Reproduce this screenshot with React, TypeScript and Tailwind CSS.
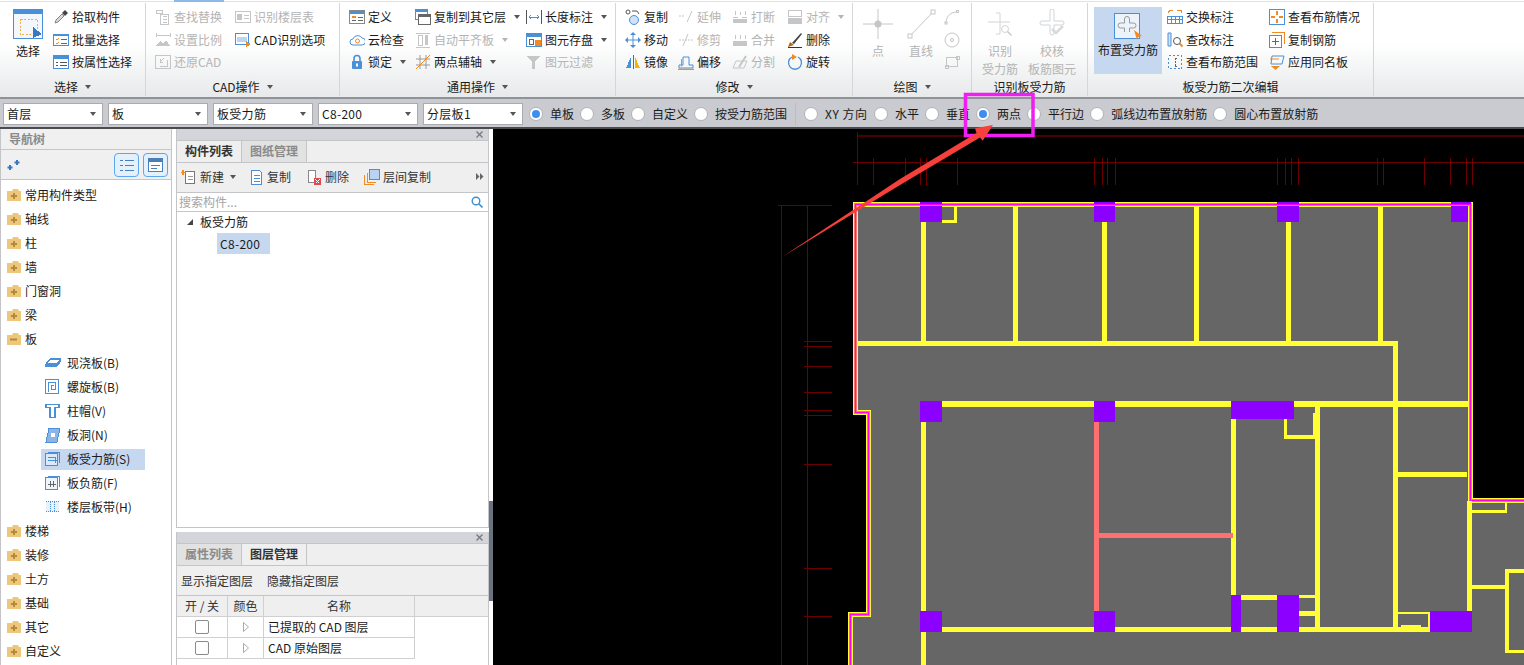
import React from "react";

const B = "#4a90d9";
const O = "#f08a24";
const D = "#c4c6c8"; // disabled icon grey

function Ico({ s = 16, children }: { s?: number; children: React.ReactNode }) {
  return (
    <svg width={s} height={s} viewBox={`0 0 ${s} ${s}`} fill="none" className="shrink-0" shapeRendering="crispEdges">
      {children}
    </svg>
  );
}

// ── ribbon icons ─────────────────────────────────────────────────────────────
const icons: Record<string, React.ReactNode> = {
  pick: <g shapeRendering="auto"><path d="M2 14l1-3 6-6 2 2-6 6z" fill="#d8d8d8" stroke="#888" /><path d="M9 4l3-3 3 3-3 3z" fill="#444" /></g>,
  batch: <><rect x=".5" y="2.5" width="15" height="11" fill="#fff" stroke={B} /><rect x="1" y="2" width="14" height="2" fill={B} /><path d="M3 7l1 1 2-2M3 11l1 1 2-2" stroke={O} /><path d="M8 7h6M8 11h6" stroke="#666" /></>,
  attr: <><rect x=".5" y="1.5" width="15" height="13" fill="#fff" stroke={B} /><rect x="1" y="2" width="14" height="3" fill={B} /><path d="M3 8h2M7 8h7M3 11h2M7 11h7" stroke="#555" /></>,
  find: <><path d="M5.5 5.5h8v10h-8z" stroke={D} /><path d="M1 1h6v3H1zM7.5 7.5h4M7.5 10.5h4M7.5 13.5h4" stroke={D} /></>,
  floor: <><rect x=".5" y="2.5" width="15" height="11" stroke={D} /><rect x="2" y="5" width="5" height="6" fill={D} /><path d="M9 6h5M9 9h5" stroke={D} /></>,
  scale: <><path d="M1 3h14M1 1v4M15 1v4" stroke={D} /><path d="M1 14l4-5 3 3 3-4 4 6z" fill={D} /></>,
  cadopt: <><rect x=".5" y="1.5" width="13" height="11" fill="#fff" stroke={B} /><rect x="2" y="5" width="10" height="5" fill="#bcd6f2" /><path d="M11 9l5 3-2 1 1 3-2-2-2 1z" fill={O} /></>,
  restore: <><rect x=".5" y="1.5" width="15" height="13" stroke={D} /><path d="M5 8l4-4M5 8v-3M5 8h3M5 12h7V6" stroke={D} /></>,
  define: <><rect x=".5" y="1.5" width="15" height="13" fill="#fff" stroke="#888" /><rect x="1" y="2" width="14" height="3" fill={B} /><rect x="3" y="7" width="4" height="2" fill={O} /><path d="M9 8h5M3 11h4M9 11h5" stroke="#666" /></>,
  cloud: <g shapeRendering="auto"><path d="M4 13a3 3 0 010-6 5 5 0 019-1 3.5 3.5 0 010 7z" stroke={B} fill="#fff" /><circle cx="8.5" cy="9" r="2" stroke={O} /></g>,
  lock: <g shapeRendering="auto"><path d="M5 7V4.5a3 3 0 016 0V7" stroke={B} strokeWidth="1.6" /><rect x="3" y="7" width="10" height="8" rx="1" fill={B} /><rect x="7" y="9.5" width="2" height="3" fill="#fff" /></g>,
  copyfloor: <><rect x=".5" y=".5" width="12" height="10" fill="#fff" stroke={B} /><rect x="1" y="1" width="11" height="2" fill={B} /><rect x="3.5" y="5.5" width="12" height="10" fill="#fff" stroke="#666" /><rect x="4" y="6" width="11" height="2" fill="#666" /></>,
  align: <><path d="M1 1h14M1 15h14" stroke={D} /><rect x="3" y="3" width="4" height="10" stroke={D} /><rect x="10" y="3" width="3" height="10" fill={D} /></>,
  axis: <g shapeRendering="auto"><path d="M1 5h14M1 11h14M5 1v14M11 1v14" stroke="#999" /><path d="M1 15L15 1" stroke={O} /></g>,
  length: <><path d="M.5 1v14M15.5 1v14" stroke="#555" /><path d="M3 8h10M5 6L3 8l2 2M11 6l2 2-2 2" stroke={B} /></>,
  save: <><rect x=".5" y="1.5" width="15" height="13" fill="#fff" stroke={B} /><rect x="1" y="2" width="14" height="3" fill={B} /><rect x="3" y="7" width="4" height="5" stroke="#666" /><rect x="9" y="8" width="6" height="6" fill={O} /></>,
  filter: <path d="M1 2h13L9 8v7H6V8z" fill={D} />,
  copy: <g shapeRendering="auto"><circle cx="3" cy="3" r="2" stroke="#555" /><circle cx="9" cy="11" r="4.5" stroke={B} fill="#cfe2f7" /><path d="M7 2h5l2 3" stroke="#555" /></g>,
  move: <g shapeRendering="auto"><path d="M8 3v10M3 8h10" stroke={B} /><path d="M8 0l3 3H5zM8 16l3-3H5zM0 8l3-3v6zM16 8l-3-3v6z" fill={B} /></g>,
  mirror: <><path d="M1 14L6 3v11z" fill={B} /><path d="M8 1v14" stroke="#666" /><path d="M15 14L10 3v11z" fill="#f7b500" /></>,
  extend: <g shapeRendering="auto"><path d="M1 7h6" stroke={D} strokeDasharray="2 1" /><path d="M9 13l5-11" stroke={D} /></g>,
  trim: <g shapeRendering="auto"><path d="M1 8h14" stroke={D} strokeDasharray="2 1" /><path d="M5 14l5-12" stroke={D} /></g>,
  offset: <g shapeRendering="auto"><path d="M1 14v-3h4V3h6v8h4v3z" stroke={B} /><path d="M0 15.500h16" stroke={O} strokeWidth="1.500" /><path d="M3.500 12.500V5" stroke={O} /></g>,
  breakk: <><path d="M1 8h5M10 8h5" stroke={D} /><rect x="1" y="10" width="14" height="4" fill={D} /><path d="M3 2v4M13 2v4M8 3v3" stroke={D} /></>,
  merge: <><rect x="1" y="9" width="14" height="5" fill={D} /><path d="M3 3v4M13 3v4M8 3v4" stroke={D} /></>,
  split: <g shapeRendering="auto"><path d="M1 14l3-7h11l-3 7z" stroke={D} /><path d="M7 13l7-11" stroke={D} strokeWidth="2" /></g>,
  alignr: <><rect x="1" y="1" width="13" height="6" stroke={D} /><rect x="1" y="9" width="14" height="6" fill={D} /></>,
  del: <g shapeRendering="auto"><path d="M5 11L14 1l1 1-8 10z" fill="#444" /><path d="M1 15l2-5 4 3z" fill="#b5651d" /><path d="M1 15.500h14" stroke="#333" /></g>,
  rotate: <g shapeRendering="auto"><path d="M5 3a6.500 6.500 0 106 0" stroke={B} strokeWidth="1.300" /><path d="M5 0v6l5-3z" fill={O} /></g>,
  arc: <g shapeRendering="auto"><path d="M2 14c0-6 4-11 11-11" stroke={D} /><rect x="1" y="13" width="2" height="2" stroke={D} /><rect x="12.500" y="1.500" width="2" height="2" stroke={D} /></g>,
  circle: <g shapeRendering="auto"><circle cx="8" cy="8" r="7" stroke={D} /><circle cx="8" cy="8" r="1.500" stroke={D} /></g>,
  rect: <><rect x="2.500" y="3.500" width="11" height="9" stroke={D} /><rect x="12" y="2" width="3" height="3" stroke={D} /><rect x="1" y="11" width="3" height="3" stroke={D} /></>,
  swap: <><path d="M2 1h4M1 4l2-3" stroke={O} /><rect x=".5" y="7.500" width="15" height="7" stroke={B} /><path d="M4.500 8v6M8.500 8v6M12.500 8v6M1 10.500h14" stroke={B} /><path d="M10 1h4v3" stroke={O} /></>,
  editmark: <g shapeRendering="auto"><path d="M1 1h3v13H1z" fill="#cfe2f7" stroke={B} /><circle cx="10" cy="9" r="3.500" stroke="#555" /><path d="M12.500 11.500l3 3" stroke={O} strokeWidth="2" /></g>,
  range: <><rect x="1.500" y="1.500" width="13" height="13" stroke={B} strokeDasharray="2 2" /><path d="M8 4v8M8 4h3M8 12h3" stroke="#666" strokeDasharray="2 1" /></>,
  viewrebar: <><rect x=".5" y=".5" width="15" height="15" fill="#fff" stroke={B} /><path d="M8 2v4M8 10v4M2 8h4M10 8h4" stroke={O} strokeWidth="2" /></>,
  copyrebar: <><path d="M3 0.500h12.500V12" stroke={O} /><rect x=".5" y="3.500" width="12" height="12" fill="#fff" stroke={B} /><path d="M6.500 6v7M3 9.500h7" stroke="#666" /></>,
  samename: <g shapeRendering="auto"><path d="M3 2h12l-2 8H2z" stroke={B} /><path d="M1 5h9" stroke={O} /><path d="M2 12h9l-4.500 4z" fill={O} /></g>,
};

function Caret({ className = "border-t-[#555]" }: { className?: string }) {
  return <span className={`inline-block w-0 h-0 border-x-[3.5px] border-x-transparent border-t-[4px] ${className}`} />;
}

function Item({ icon, text, dis, caret }: { icon: string; text: string; dis?: boolean; caret?: boolean }) {
  return (
    <div className={`h-[22.5px] flex items-center gap-[3px] whitespace-nowrap ${dis ? "text-[#b4b4b4]" : "text-[#1a1a1a]"}`}>
      <Ico>{icons[icon]}</Ico>
      <span>{text}</span>
      {caret && <Caret className={dis ? "ml-[5px] border-t-[#b4b4b4]" : "ml-[5px] border-t-[#555]"} />}
    </div>
  );
}

function Group({ w, label, caret, children }: { w: string; label: string; caret?: boolean; children: React.ReactNode }) {
  return (
    <div className={`${w} shrink-0 h-[93px] flex flex-col border-r border-[#d4d6d8]`}>
      <div className="h-[75px] flex pt-[3px]">{children}</div>
      <div className="h-[18px] flex items-center justify-center gap-[7px] text-[#1a1a1a]">
        <span>{label}</span>
        {caret && <Caret />}
      </div>
    </div>
  );
}

function Col({ w, children, className = "" }: { w: string; children: React.ReactNode; className?: string }) {
  return <div className={`${w} shrink-0 flex flex-col ${className}`}>{children}</div>;
}

function Big({ w, children, lines, dis }: { w: string; children: React.ReactNode; lines: string[]; dis?: boolean }) {
  return (
    <div className={`${w} shrink-0 flex flex-col items-center ${dis ? "text-[#b4b4b4]" : "text-[#1a1a1a]"}`}>
      <div className="h-[33px] pt-[3px] flex items-start justify-center">{children}</div>
      <div className="leading-[18px] mt-[3px] text-center whitespace-nowrap">
        {lines.map((l) => <div key={l}>{l}</div>)}
      </div>
    </div>
  );
}

function Ribbon() {
  return (
    <div className="relative h-[99px] shrink-0 flex pt-[3px] bg-linear-to-b from-white from-45% to-[#e7e9ea] border-b-2 border-[#8f9297]">
      <div className="absolute left-0 right-0 top-[1px] h-px bg-[#e2e2e2]" />
      <div className="absolute left-[174px] top-0 w-[50px] h-[2px] bg-[#8db9e8]" />

      <Group w="w-[146px]" label="选择" caret>
        <Big w="w-[56px]" lines={["选择"]}>
          <svg width="30" height="30" viewBox="0 0 30 30" fill="none" shapeRendering="crispEdges">
            <rect x=".5" y=".5" width="29" height="29" fill="#f3f6fb" stroke={B} />
            <rect x="1" y="1" width="28" height="4" fill={B} />
            <rect x="7.500" y="10.500" width="17" height="15" stroke="#f5b041" strokeDasharray="2 1.500" />
            <path d="M20 18l9 7-9 4z" fill="#3a78c2" />
          </svg>
        </Big>
        <Col w="w-[88px]" className="-ml-[3px]">
          <Item icon="pick" text="拾取构件" />
          <Item icon="batch" text="批量选择" />
          <Item icon="attr" text="按属性选择" />
        </Col>
      </Group>

      <Group w="w-[194px]" label="CAD操作" caret>
        <div className="w-[9px]" />
        <Col w="w-[80px]">
          <Item dis icon="find" text="查找替换" />
          <Item dis icon="scale" text="设置比例" />
          <Item dis icon="restore" text="还原CAD" />
        </Col>
        <Col w="w-[104px]">
          <Item dis icon="floor" text="识别楼层表" />
          <Item icon="cadopt" text="CAD识别选项" />
        </Col>
      </Group>

      <Group w="w-[276px]" label="通用操作" caret>
        <div className="w-[9px]" />
        <Col w="w-[66px]">
          <Item icon="define" text="定义" />
          <Item icon="cloud" text="云检查" />
          <Item icon="lock" text="锁定" caret />
        </Col>
        <Col w="w-[111px]">
          <Item icon="copyfloor" text="复制到其它层" caret />
          <Item dis icon="align" text="自动平齐板" caret />
          <Item icon="axis" text="两点辅轴" caret />
        </Col>
        <Col w="w-[88px]">
          <Item icon="length" text="长度标注" caret />
          <Item icon="save" text="图元存盘" caret />
          <Item dis icon="filter" text="图元过滤" />
        </Col>
      </Group>

      <Group w="w-[237px]" label="修改" caret>
        <div className="w-[9px]" />
        <Col w="w-[53px]">
          <Item icon="copy" text="复制" />
          <Item icon="move" text="移动" />
          <Item icon="mirror" text="镜像" />
        </Col>
        <Col w="w-[54px]">
          <Item dis icon="extend" text="延伸" />
          <Item dis icon="trim" text="修剪" />
          <Item icon="offset" text="偏移" />
        </Col>
        <Col w="w-[55px]">
          <Item dis icon="breakk" text="打断" />
          <Item dis icon="merge" text="合并" />
          <Item dis icon="split" text="分割" />
        </Col>
        <Col w="w-[60px]">
          <Item dis icon="alignr" text="对齐" caret />
          <Item icon="del" text="删除" />
          <Item icon="rotate" text="旋转" />
        </Col>
      </Group>

      <Group w="w-[119px]" label="绘图" caret>
        <Big dis w="w-[50px]" lines={["点"]}>
          <svg width="30" height="30" viewBox="0 0 30 30" fill="none">
            <path d="M15 0v30M0 15h30" stroke={D} />
            <circle cx="15" cy="15" r="3.500" fill={D} />
          </svg>
        </Big>
        <Big dis w="w-[36px]" lines={["直线"]}>
          <svg width="30" height="30" viewBox="0 0 30 30" fill="none">
            <path d="M4 27L27 3" stroke={D} />
            <rect x="2" y="25" width="4" height="4" fill="#fff" stroke={D} />
            <rect x="25" y="1" width="4" height="4" fill="#fff" stroke={D} />
          </svg>
        </Big>
        <div className="w-[5px]" />
        <div className="flex flex-col">
          <div className="h-[22.5px] flex items-center"><Ico>{icons.arc}</Ico></div>
          <div className="h-[22.5px] flex items-center"><Ico>{icons.circle}</Ico></div>
          <div className="h-[22.5px] flex items-center"><Ico>{icons.rect}</Ico></div>
        </div>
      </Group>

      <Group w="w-[116px]" label="识别板受力筋">
        <Big dis w="w-[56px]" lines={["识别", "受力筋"]}>
          <svg width="28" height="30" viewBox="0 0 28 30" fill="none">
            <path d="M10 4h4v9h10M14 13v12h-4M2 13h12" stroke="#d2d4d6" />
            <circle cx="19" cy="20" r="3.500" stroke="#d2d4d6" />
            <path d="M21.500 22.500l4 4" stroke={D} strokeWidth="1.500" />
          </svg>
        </Big>
        <Big dis w="w-[48px]" lines={["校核", "板筋图元"]}>
          <svg width="28" height="30" viewBox="0 0 28 30" fill="none">
            <path d="M12 2a2 2 0 014 0v10h8a2 2 0 010 4h-8v8a2 2 0 01-4 0v-8H4a2 2 0 010-4h8z" stroke="#d2d4d6" />
            <path d="M14 20l4 4 7-7" stroke="#d8dadc" strokeWidth="2.500" />
          </svg>
        </Big>
      </Group>

      <Group w="w-[286px]" label="板受力筋二次编辑">
        <div className="w-[6px]" />
        <div className="w-[68px] h-[67px] mt-[1px] shrink-0 bg-[#c6d8f0] flex flex-col items-center text-[#1a1a1a]">
          <svg className="mt-[3px]" width="28" height="30" viewBox="0 0 28 30" fill="none">
            <rect x=".5" y="3.500" width="25" height="25" fill="#edf3fb" stroke={B} />
            <path d="M10.500 13V9a2.500 2.500 0 015 0v4h4a2.500 2.500 0 010 5h-4v4M10.500 22v-4h-4a2.500 2.500 0 010-5h4" stroke="#999" />
            <path d="M20 20l8 6-4 1-1 3z" fill={O} />
          </svg>
          <span className="mt-[4px] whitespace-nowrap">布置受力筋</span>
        </div>
        <div className="w-[5px]" />
        <Col w="w-[102px]">
          <Item icon="swap" text="交换标注" />
          <Item icon="editmark" text="查改标注" />
          <Item icon="range" text="查看布筋范围" />
        </Col>
        <Col w="w-[100px]">
          <Item icon="viewrebar" text="查看布筋情况" />
          <Item icon="copyrebar" text="复制钢筋" />
          <Item icon="samename" text="应用同名板" />
        </Col>
      </Group>
    </div>
  );
}

function Sel({ v }: { v: string }) {
  return (
    <div className="w-[100px] h-[22px] shrink-0 bg-white border border-[#a9abaf] flex items-center justify-between pl-[3px] pr-[6px] text-[#1a1a1a] tracking-[0.3px]">
      <span>{v}</span>
      <Caret />
    </div>
  );
}

function Radio({ text, on, textW = "" }: { text: string; on?: boolean; textW?: string }) {
  return (
    <div className="flex items-center gap-[7px] whitespace-nowrap">
      <span className="w-[14px] h-[14px] rounded-full bg-white border border-[#b0b2b6] flex items-center justify-center">
        {on && <span className="w-[8px] h-[8px] rounded-full bg-[#3d8ef0]" />}
      </span>
      <span className={textW}>{text}</span>
    </div>
  );
}

function OptionBar() {
  return (
    <div className="h-[30px] shrink-0 bg-[#c9cbd0] border-b-2 border-[#4a4c50] flex items-center pl-[3px] pt-[2px] text-[#1a1a1a]">
      <div className="flex gap-[5px]">
        {["首层", "板", "板受力筋", "C8-200", "分层板1"].map((v) => <Sel key={v} v={v} />)}
      </div>
      <div className="flex gap-[6px] ml-[6px]">
        <Radio on text="单板" />
        <Radio text="多板" />
        <Radio text="自定义" />
        <Radio text="按受力筋范围" />
      </div>
      <div className="w-px h-[22px] bg-[#bcbec3] ml-[8px] mr-[8px]" />
      <div className="flex gap-[6px]">
        <Radio text="XY 方向" textW="w-[43px] tracking-[0.5px]" />
        <Radio text="水平" />
        <Radio text="垂直" />
        <Radio on text="两点" />
        <Radio text="平行边" />
        <Radio text="弧线边布置放射筋" />
        <Radio text="圆心布置放射筋" />
      </div>
    </div>
  );
}

// ── tree ─────────────────────────────────────────────────────────────────────
function Folder({ open }: { open?: boolean }) {
  return (
    <svg width="16" height="14" viewBox="0 0 16 14" fill="none" className="shrink-0">
      <path d="M1 3h5l1-2h5l1 2h2v10H1z" fill="#edc77c" />
      {open ? <rect x="4" y="6.500" width="7" height="2" fill="#b58a3a" /> : <path d="M8 5v6M5 8h6" stroke="#b58a3a" strokeWidth="2" />}
    </svg>
  );
}

const subIcons: Record<string, React.ReactNode> = {
  cast: <path d="M1 9l4-5h10v3l-3 4H1zM1 9h11l3-4" stroke={B} strokeWidth="1.200" />,
  spiral: <><rect x=".5" y=".5" width="13" height="14" stroke={B} /><path d="M3.500 12.500v-9h7v7h-4v-4h2" stroke={B} /></>,
  cap: <path d="M1 1.500h13v3H10v10H5v-10H1z" stroke={B} strokeWidth="1.200" />,
  hole: <><path d="M4 1h11l-3 14H1z" fill="#8db4e6" stroke={B} /><path d="M6.500 6h4l-1 4h-4z" fill="#fff" /></>,
  stress: <><rect x=".5" y="2.500" width="12" height="12" fill="#dbe8f8" stroke={B} /><path d="M3 1h11.500v11" stroke={B} /><path d="M3 6h7v6M3 9h9" stroke={B} /></>,
  neg: <><rect x=".5" y="2.500" width="12" height="12" fill="#eef4fc" stroke={B} /><path d="M3 1h11.500v11" stroke={B} /><path d="M5 6v6M8 6v6M3 9h8" stroke="#666" /></>,
  band: <><rect x="1" y="2" width="13" height="11" fill="#e8f0fa" /><path d="M1 2.500h13M1 12.500h13M5.500 3v9M9.500 3v9" stroke={B} strokeDasharray="1 1" /></>,
};

function NavTree() {
  const before = ["常用构件类型", "轴线", "柱", "墙", "门窗洞", "梁"];
  const subs = [
    ["cast", "现浇板(B)"], ["spiral", "螺旋板(B)"], ["cap", "柱帽(V)"], ["hole", "板洞(N)"],
    ["stress", "板受力筋(S)"], ["neg", "板负筋(F)"], ["band", "楼层板带(H)"],
  ];
  const after = ["楼梯", "装修", "土方", "基础", "其它", "自定义"];
  const row = (t: string, open?: boolean) => (
    <div key={t} className="h-[24px] flex items-center gap-[3px] pl-[5px] text-[#1a1a1a]"><Folder open={open} /><span>{t}</span></div>
  );
  return (
    <div className="w-[172px] shrink-0 border-x border-[#c3c5c9] flex flex-col bg-white">
      <div className="h-[21px] shrink-0 bg-[#f0f0f0] border-b border-[#c3c5c9] pl-[8px] pb-px flex items-center font-bold text-[#8a8a8a]">导航树</div>
      <div className="h-[30px] shrink-0 bg-[#f0f0f0] border-b border-[#c3c5c9] flex items-center pl-[6px] pr-[3px]">
        <svg width="14" height="12" viewBox="0 0 14 12" fill="none"><path d="M3 6v5M0.500 8.500h5M10 1v5M7.500 3.500h5" stroke="#3a78c2" strokeWidth="2" /></svg>
        <div className="ml-auto flex gap-[4px]">
          <div className="w-[25px] h-[24px] rounded-[4px] border border-[#5ba7f0] bg-[#e4f1fd] flex items-center justify-center">
            <svg width="14" height="14" viewBox="0 0 14 14" fill="none" shapeRendering="crispEdges"><path d="M0 2.500h3M5 2.500h9M0 7.500h3M5 7.500h9M0 12.500h3M5 12.500h9" stroke="#4a7fb8" /></svg>
          </div>
          <div className="w-[25px] h-[24px] rounded-[4px] border border-[#5ba7f0] bg-[#e4f1fd] flex items-center justify-center">
            <svg width="15" height="14" viewBox="0 0 15 14" fill="none" shapeRendering="crispEdges"><rect x=".5" y=".5" width="14" height="13" fill="#fff" stroke="#4a7fb8" /><rect x="1" y="1" width="13" height="3" fill="#4a7fb8" /><path d="M3 7.500h9M3 10.500h6" stroke="#4a7fb8" /></svg>
          </div>
        </div>
      </div>
      <div className="pt-[3px] overflow-hidden">
        {before.map((t) => row(t))}
        {row("板", true)}
        {subs.map(([ic, t]) => (
          <div key={t} className="h-[24px] flex items-center pl-[40px]">
            <div className={`w-[104px] h-[21px] flex items-center gap-[6px] pl-[4px] text-[#1a1a1a] ${ic === "stress" ? "bg-[#c6d8f0]" : ""}`}>
              <Ico>{subIcons[ic]}</Ico>
              <span className="whitespace-nowrap">{t}</span>
            </div>
          </div>
        ))}
        {after.map((t) => row(t))}
      </div>
    </div>
  );
}

function PanelHead() {
  return (
    <div className="h-[12px] shrink-0 bg-[#d3d5da] border-b border-[#c3c5c9] flex items-center justify-end pr-[5px]">
      <svg width="7" height="7" viewBox="0 0 7 7" fill="none"><path d="M.5.5l6 6M6.500.5l-6 6" stroke="#777" strokeWidth="1.300" /></svg>
    </div>
  );
}

function Tab({ text, active }: { text: string; active?: boolean }) {
  return (
    <div className={`w-[65px] h-full pb-px border-r border-[#c3c5c9] flex items-center justify-center font-bold ${active ? "bg-[#efefef] text-[#333]" : "bg-[#e2e2e2] text-[#8a8a8a]"}`}>
      {text}
    </div>
  );
}

function ListPanel() {
  return (
    <div className="h-[399px] shrink-0 border border-t-0 border-[#c3c5c9] flex flex-col bg-white">
      <PanelHead />
      <div className="h-[22px] shrink-0 bg-[#efefef] border-b border-[#c3c5c9] flex">
        <Tab active text="构件列表" />
        <Tab text="图纸管理" />
      </div>
      <div className="h-[30px] shrink-0 bg-[#efefef] border-b border-[#c3c5c9] flex items-center pl-[4px] pr-[2px] pb-[2px] text-[#333]">
        <Ico><path d="M4.500 2.500h9v12h-9z" fill="#fff" stroke="#777" shapeRendering="crispEdges" /><path d="M2 1v5M0 3.500h5" stroke={O} strokeWidth="1.500" /><path d="M7 7h5M7 10h5" stroke="#999" /></Ico>
        <span className="ml-[3px]">新建</span>
        <Caret className="ml-[6px] border-t-[#555]" />
        <span className="ml-[12px]"><Ico><path d="M3.500 1.500h8l2 2v12h-10z" fill="#fff" stroke={B} /><path d="M5.500 6h6M5.500 9h6M5.500 12h6" stroke={B} /></Ico></span>
        <span className="ml-[3px]">复制</span>
        <span className="ml-[15px]"><Ico><path d="M2.500 1.500h7v12h-7z" fill="#fff" stroke="#888" /><rect x="8" y="9" width="7" height="7" fill="#e0484d" /><path d="M9.500 10.500l4 4M13.500 10.500l-4 4" stroke="#fff" /></Ico></span>
        <span className="ml-[3px]">删除</span>
        <span className="ml-[15px]"><Ico><rect x="5" y="0.500" width="10" height="10" fill="#b8d3f4" stroke={B} /><path d="M3 4v9h9M.500 6v9.500H10" stroke={O} /></Ico></span>
        <span className="ml-[3px]">层间复制</span>
        <svg className="ml-auto mr-[2px]" width="8" height="7" viewBox="0 0 8 7"><path d="M0 0l3.500 3.500L0 7zM4 0l3.500 3.500L4 7z" fill="#666" /></svg>
      </div>
      <div className="h-[19px] shrink-0 border-b border-[#c3c5c9] flex items-center pl-[2px] pr-[5px] text-[#a5a5a5]">
        <span>搜索构件...</span>
        <svg className="ml-auto" width="12" height="12" viewBox="0 0 12 12" fill="none"><circle cx="5" cy="5" r="3.800" stroke="#3f8fd0" strokeWidth="1.400" /><path d="M8 8l3.500 3.500" stroke="#3f8fd0" strokeWidth="1.600" /></svg>
      </div>
      <div className="flex items-center h-[21px] pl-[10px] pb-px text-[#1a1a1a]">
        <span className="w-0 h-0 border-l-[6px] border-l-transparent border-b-[6px] border-b-[#444]" />
        <span className="ml-[7px]">板受力筋</span>
      </div>
      <div className="ml-[40px] w-[53px] h-[21px] bg-[#c6d8f0] flex items-center pl-[3px] text-[#1a1a1a] tracking-[0.3px]">C8-200</div>
    </div>
  );
}

function LayerRow({ name }: { name: string }) {
  return (
    <div className="h-[21px] flex border-b border-[#d0d0d0]">
      <div className="w-[51px] border-r border-[#d0d0d0] flex items-center justify-center">
        <span className="w-[14px] h-[14px] rounded-[2px] border border-[#8a8a8a] bg-white" />
      </div>
      <div className="w-[36px] border-r border-[#d0d0d0] flex items-center justify-center">
        <svg width="6" height="10" viewBox="0 0 6 10" fill="none"><path d="M.5.5L5.500 5 .5 9.500z" stroke="#aaa" /></svg>
      </div>
      <div className="w-[151px] border-r border-[#d0d0d0] flex items-center pl-[4px] text-[#1a1a1a] whitespace-pre">{name}</div>
    </div>
  );
}

function LayerPanel() {
  return (
    <div className="flex-1 border-x border-[#c3c5c9] flex flex-col bg-white overflow-hidden">
      <PanelHead />
      <div className="h-[22px] shrink-0 bg-[#efefef] border-b border-[#c3c5c9] flex">
        <Tab text="属性列表" />
        <Tab active text="图层管理" />
      </div>
      <div className="h-[30px] shrink-0 bg-[#efefef] border-b border-[#c3c5c9] flex items-center gap-[14px] pl-[4px] text-[#333]">
        <span>显示指定图层</span>
        <span>隐藏指定图层</span>
      </div>
      <div className="h-[21px] shrink-0 bg-[#efefef] border-b border-[#d0d0d0] flex text-[#333]">
        <div className="w-[51px] border-r border-[#d0d0d0] flex items-center justify-center whitespace-pre">开 / 关</div>
        <div className="w-[36px] border-r border-[#d0d0d0] flex items-center justify-center">颜色</div>
        <div className="w-[151px] border-r border-[#d0d0d0] flex items-center justify-center">名称</div>
      </div>
      <div className="w-[238px]">
        <LayerRow name="已提取的 CAD 图层" />
        <LayerRow name="CAD 原始图层" />
      </div>
    </div>
  );
}

// ── CAD drawing, in page coordinates ─────────────────────────────────────────
const Y = "#ffff33";
const P = "#8b00ff";
const R = "#ff7070";
const yellowWalls = [
  [921, 222, 5, 120], [1013, 206, 5, 136], [1102, 222, 5, 120], [1194, 206, 5, 136], [1286, 222, 5, 120], [1378, 206, 5, 136],
  [858, 341, 540, 5], [1393, 341, 5, 286], [942, 220, 15, 2.500], [954, 206, 3, 16],
  [942, 401, 527, 6], [942, 627, 488, 5], [921, 422, 5, 243], [1231, 419, 5, 176], [1315, 407, 5, 220],
  [1284, 419, 3, 20], [1284, 435, 31, 4], [1313, 413, 2, 22], [1241, 595, 37, 5], [1298, 595, 17, 2.500], [1298, 611, 17, 5],
  [1398, 472, 69, 5], [1398, 612, 32, 2], [1428, 612, 2, 15], [1401, 625, 20, 2], [1467, 501, 5, 110],
  [1472, 510, 35, 2.500], [1505, 503, 2, 9], [1472, 585, 34, 4], [1505, 569, 4, 84], [1505, 569, 19, 4], [1505, 650, 19, 3],
];
const columns = [
  [920, 206, 22, 16], [1094, 206, 21, 16], [1277, 206, 22, 16], [1451, 206, 17, 16],
  [920, 202, 22, 2], [1094, 202, 21, 2], [1277, 202, 22, 2], [1451, 202, 20, 2],
  [920, 401, 22, 21], [1094, 401, 21, 21], [1231, 401, 63, 18],
  [920, 611, 22, 21], [1094, 611, 21, 21], [1231, 595, 10, 37], [1277, 595, 22, 37], [1430, 611, 42, 21],
];
const outline = "M850 665V614.500H868V412.500H855V204.500H1470V500.500H1524";
const ticksTop = [873.5, 905, 920, 926, 957, 1094, 1102, 1107, 1115, 1277.5, 1285, 1291, 1298.5, 1377.5, 1383, 1424, 1450.5, 1466.5, 1472.5];
const ticksLeft = [341, 346, 366, 392, 410, 415, 464, 568, 616];

function CadDrawing() {
  return (
    <svg className="w-full h-full block" viewBox="493 129 1031 536" shapeRendering="crispEdges">
      <rect x="493" y="129" width="1031" height="536" fill="#000" />
      <g stroke="#6a0000">
        <path d="M857 136H1524" strokeWidth="2" stroke="#4a0000" />
        <path d="M853 162H1524M857.500 132V185" />
        {ticksTop.map((x) => <path key={x} d={`M${x} 158V185`} />)}
        <path d="M781.500 205V665M807 205V665M778 205H832" />
        {ticksLeft.map((y) => <path key={y} d={`M804 ${y}H832`} />)}
      </g>
      <path d="M855 204.500H1470V500.500H1524V665H850V614.500H868V412.500H855z" fill="#666" />
      <path d={outline} fill="none" stroke={Y} strokeWidth="5" />
      <path d={outline} fill="none" stroke={R} strokeWidth="3" />
      <path d={outline} fill="none" stroke="#ff00ff" strokeWidth="1" />
      {yellowWalls.map(([x, y, w, h], i) => <rect key={i} x={x} y={y} width={w} height={h} fill={Y} />)}
      <rect x="1094" y="422" width="5" height="189" fill={R} />
      <rect x="1099" y="533" width="134" height="5" fill={R} />
      {columns.map(([x, y, w, h], i) => <rect key={i} x={x} y={y} width={w} height={h} fill={P} />)}
    </svg>
  );
}

export default function App() {
  return (
    <div className="relative w-[1524px] h-[665px] overflow-hidden flex flex-col bg-white text-[12px] leading-none font-['Noto_Sans_CJK_SC','Noto_Sans',sans-serif]">
      <Ribbon />
      <OptionBar />
      <div className="flex-1 flex min-h-0">
        <NavTree />
        <div className="w-[4px] shrink-0" />
        <div className="w-[313px] shrink-0 flex flex-col">
          <ListPanel />
          <div className="h-[4px] shrink-0" />
          <LayerPanel />
        </div>
        <div className="w-[4px] shrink-0 pt-[372px]">
          <div className="w-[4px] h-[100px] bg-[#69737d]" />
        </div>
        <div className="flex-1 min-w-0"><CadDrawing /></div>
      </div>
      {/* annotation drawn over the shot */}
      <svg className="absolute inset-0 pointer-events-none" width="1524" height="665" viewBox="0 0 1524 665" fill="none">
        <rect x="965.500" y="94.500" width="67.500" height="41" stroke="#f01ef0" strokeWidth="3.500" />
        <path d="M782 257L900 179L976.500 133L975 128.300L993 125L982.700 140.700L980 137.500L900 185z" fill="#f5403c" />
      </svg>
    </div>
  );
}
